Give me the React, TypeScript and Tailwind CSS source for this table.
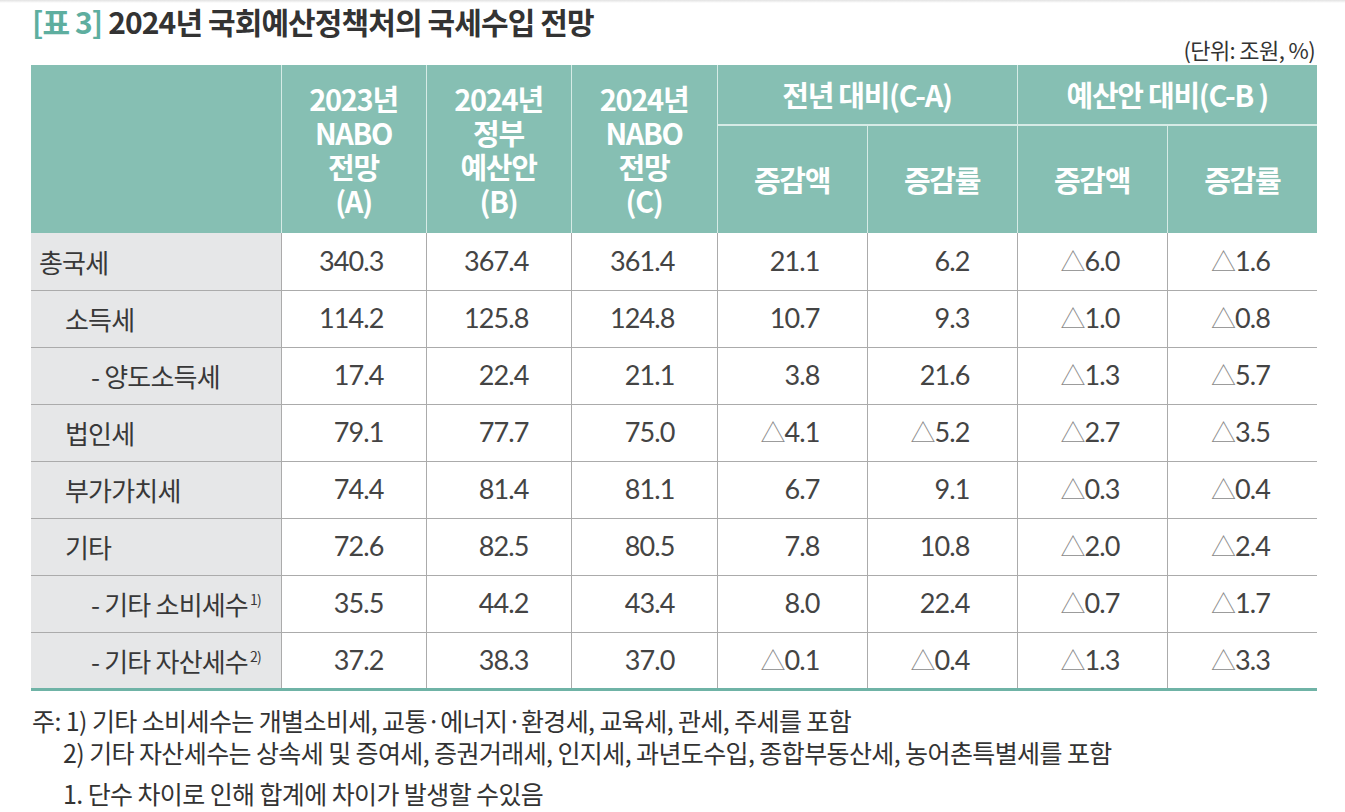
import React from "react";

type Row = {
  label: string;
  level: 0 | 1 | 2;
  sup?: string;
  values: string[];
};

const rows: Row[] = [
  { label: "총국세", level: 0, values: ["340.3", "367.4", "361.4", "21.1", "6.2", "△6.0", "△1.6"] },
  { label: "소득세", level: 1, values: ["114.2", "125.8", "124.8", "10.7", "9.3", "△1.0", "△0.8"] },
  { label: "- 양도소득세", level: 2, values: ["17.4", "22.4", "21.1", "3.8", "21.6", "△1.3", "△5.7"] },
  { label: "법인세", level: 1, values: ["79.1", "77.7", "75.0", "△4.1", "△5.2", "△2.7", "△3.5"] },
  { label: "부가가치세", level: 1, values: ["74.4", "81.4", "81.1", "6.7", "9.1", "△0.3", "△0.4"] },
  { label: "기타", level: 1, values: ["72.6", "82.5", "80.5", "7.8", "10.8", "△2.0", "△2.4"] },
  { label: "- 기타 소비세수", level: 2, sup: "1)", values: ["35.5", "44.2", "43.4", "8.0", "22.4", "△0.7", "△1.7"] },
  { label: "- 기타 자산세수", level: 2, sup: "2)", values: ["37.2", "38.3", "37.0", "△0.1", "△0.4", "△1.3", "△3.3"] },
];

const kr = { fontFamily: '"Noto Sans CJK KR", "Noto Sans", sans-serif' };
const num = { fontFamily: 'Lato, "Liberation Sans", sans-serif' };

function Value({ v }: { v: string }) {
  if (v.startsWith("△")) {
    return (
      <>
        <span className="text-[#8a8a8a] text-[25px] font-light" style={kr}>
          △
        </span>
        {v.slice(1)}
      </>
    );
  }
  return <>{v}</>;
}

export default function App() {
  const indent = ["pl-[8px]", "pl-[34px]", "pl-[60px]"];
  return (
    <div className="w-[1345px] h-[812px] bg-white relative overflow-hidden" style={kr}>
      <div className="h-[3px] bg-gradient-to-b from-[#e2e2e2] to-white" />
      <div className="pl-[32px] pr-[30px]">
        <h1 className="text-[30px] font-bold leading-[36px] tracking-[-0.9px] text-[#333]">
          <span className="text-[#5eae9f]">[표 3]</span> 2024년 국회예산정책처의 국세수입 전망
        </h1>
        <div className="text-right text-[22px] leading-[24px] text-[#333] tracking-[-0.6px] mt-[-2px]">
          (단위: 조원, %)
        </div>
      </div>

      <table className="ml-[31px] mt-[4px] w-[1286px] table-fixed border-collapse">
        <colgroup>
          <col className="w-[250px]" />
          <col className="w-[145px]" />
          <col className="w-[145px]" />
          <col className="w-[146px]" />
          <col className="w-[150px]" />
          <col className="w-[150px]" />
          <col className="w-[150px]" />
          <col className="w-[150px]" />
        </colgroup>
        <thead className="text-white font-bold text-[29px] tracking-[-1.3px]">
          <tr className="h-[60px] bg-[#86bfb3]">
            <th rowSpan={2} className="bg-[#86bfb3]" />
            {["2023년|NABO|전망|(A)", "2024년|정부|예산안|(B)", "2024년|NABO|전망|(C)"].map((t) => (
              <th key={t} rowSpan={2} className="border-l border-[#d6ebe6] leading-[34px] align-middle">
                {t.split("|").map((line) => (
                  <div key={line}>{line}</div>
                ))}
              </th>
            ))}
            <th colSpan={2} className="border-l border-b-2 border-[#d6ebe6]">
              전년 대비(C-A)
            </th>
            <th colSpan={2} className="border-l border-b-2 border-[#d6ebe6]">
              예산안 대비(C-B )
            </th>
          </tr>
          <tr className="h-[108px] bg-[#86bfb3]">
            {["증감액", "증감률", "증감액", "증감률"].map((t, i) => (
              <th key={i} className="border-l border-[#d6ebe6]">
                {t}
              </th>
            ))}
          </tr>
        </thead>
        <tbody className="text-[#444]">
          {rows.map((r, ri) => {
            const last = ri === rows.length - 1;
            const bottom = last ? "border-b-[3px] border-b-[#6fb3a6]" : "border-b border-b-[#ababab]";
            return (
              <tr key={r.label} className="h-[57px]">
                <td className={`bg-[#e6e7e8] text-[26px] tracking-[-0.8px] text-[#383838] ${indent[r.level]} ${bottom}`}>
                  {r.label}
                  {r.sup && <sup className="text-[14px] ml-[2px] top-[-0.7em]">{r.sup}</sup>}
                </td>
                {r.values.map((v, vi) => (
                  <td
                    key={vi}
                    className={`text-right text-[27px] tracking-[-0.9px] border-l border-l-[#ababab] ${
                      vi < 3 ? "pr-[42px]" : "pr-[47px]"
                    } ${bottom}`}
                    style={num}
                  >
                    <Value v={v} />
                  </td>
                ))}
              </tr>
            );
          })}
        </tbody>
      </table>

      <div className="pl-[32px] mt-[13px] text-[25px] text-[#333] tracking-[-0.6px] leading-[32px]">
        <div>주: 1) 기타 소비세수는 개별소비세, 교통·에너지·환경세, 교육세, 관세, 주세를 포함</div>
        <div className="pl-[31px]">
          2) 기타 자산세수는 상속세 및 증여세, 증권거래세, 인지세, 과년도수입, 종합부동산세, 농어촌특별세를 포함
        </div>
        <div className="pl-[31px] mt-[9px]">1. 단수 차이로 인해 합계에 차이가 발생할 수있음</div>
      </div>
    </div>
  );
}
